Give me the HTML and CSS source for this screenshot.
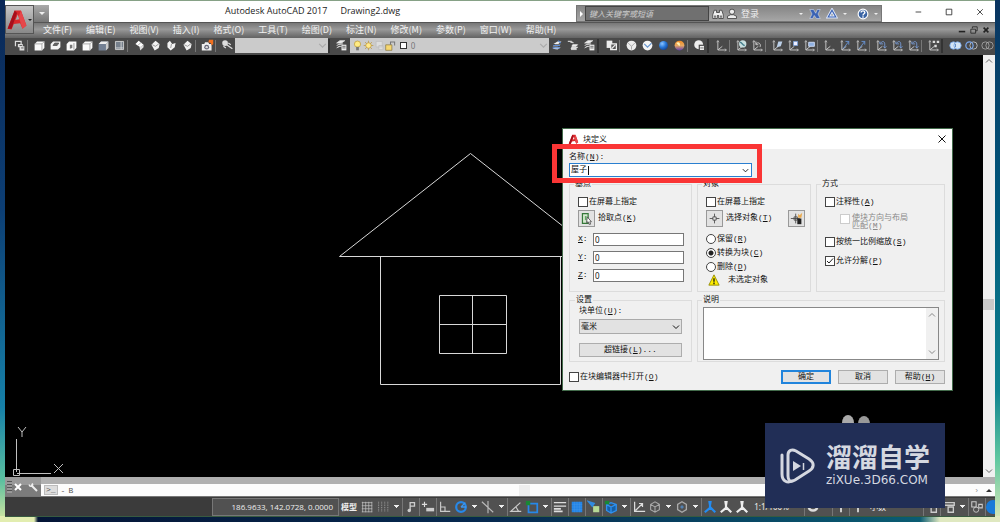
FILE: index.html
```html
<!DOCTYPE html>
<html lang="zh-CN">
<head>
<meta charset="utf-8">
<title>Autodesk AutoCAD 2017 - Drawing2.dwg</title>
<link rel="stylesheet" href="styles.css">
</head>
<body>
<svg class="defs" aria-hidden="true">
  <defs>
    <radialGradient id="ball" cx=".35" cy=".3" r=".8"><stop offset="0" stop-color="#8cc4ff"/><stop offset=".5" stop-color="#2878d8"/><stop offset="1" stop-color="#123c86"/></radialGradient>
    <linearGradient id="sun" x1="0" y1="0" x2="0" y2="1"><stop offset="0" stop-color="#f08a20"/><stop offset=".5" stop-color="#e8a860"/><stop offset="1" stop-color="#6040b0"/></linearGradient>
    <symbol id="views" viewBox="0 0 16 16"><path d="M3 9V3h7v3" fill="none" stroke="#ddd" stroke-width="1.500"/><path d="M6 6h6v3h2v5H8v-4H6z" fill="#ddd"/><path d="M8 8h3M10 11h3" stroke="#444"/></symbol>
    <symbol id="cube-top" viewBox="0 0 16 16"><path d="M2 6l3-3h9v8l-3 3H2z" fill="#fafafa"/><path d="M2 6h9v8M11 6l3-3" fill="none" stroke="#999"/></symbol>
    <symbol id="cube-bottom" viewBox="0 0 16 16"><path d="M2 6l3-3h9v7l-3 3H2z" fill="#f4f4f4"/><path d="M5 8h5l2-3H7z" fill="#666" stroke="#555"/></symbol>
    <symbol id="cube-left" viewBox="0 0 16 16"><path d="M2 6l3-3h9v8l-3 3H2z" fill="#fafafa"/><path d="M6 7h3v4l-3 1z" fill="#777"/><path d="M11 5v8" stroke="#888"/></symbol>
    <symbol id="cube-back" viewBox="0 0 16 16"><path d="M2 6l3-3h9v8l-3 3H2z" fill="#738094"/><path d="M2 6l3-3h9l-3 3z" fill="#eee"/><path d="M11 6l3-3v8l-3 3z" fill="#ccc"/></symbol>
    <symbol id="cube-line" viewBox="0 0 16 16"><path d="M3 3h10v10H3z" fill="#76808c" stroke="#ddd"/><path d="M10 3v10M3 11h10" stroke="#ddd"/></symbol>
    <symbol id="iso-a" viewBox="0 0 16 16"><path d="M7 2l6 5-4 3-6-4z" fill="#fff"/><path d="M8 10l5-3v3l-4 4z" fill="#ddd"/><path d="M6 8l4-4" stroke="#999"/></symbol>
    <symbol id="iso-b" viewBox="0 0 16 16"><path d="M3 7l5-5 5 4-1 5-5 3z" fill="#f2f2f2"/><path d="M4 7l4 2 4-3" fill="none" stroke="#888"/></symbol>
    <symbol id="iso-c" viewBox="0 0 16 16"><path d="M3 5l3-3 3 4 4-1-1 5-5 4-4-4z" fill="#f2f2f2"/><path d="M8 6l-1 5" stroke="#888"/></symbol>
    <symbol id="camera" viewBox="0 0 16 16"><path d="M1 6h3l1-2h4l1 2h3v8H1z" fill="#eee"/><circle cx="7" cy="10" r="3" fill="#667"/><circle cx="7" cy="10" r="1.500" fill="#ddd"/><path d="M10 1h5v5l-2 2-1-3-3-1z" fill="#f07020"/></symbol>
    <symbol id="orbit" viewBox="0 0 16 16"><circle cx="5" cy="5" r="3.500" fill="#ddd"/><path d="M3 5h3M7 7l7 5M3 9l3 2M9 5l3 2" stroke="#ddd" stroke-width="1.500"/></symbol>
    <symbol id="layers" viewBox="0 0 16 16"><path d="M2 5l4-3h6l-4 3zM2 8l4-2h4M2 11l3-2h3" fill="#eee" stroke="#ddd"/><path d="M8 7h6v7H8z" fill="#eee"/><path d="M9 9h4M9 11h4" stroke="#555"/></symbol>
    <symbol id="layers-blue" viewBox="0 0 16 16"><path d="M3 6l5-3h5l-4 3zM2 9l3-2h7l-4 2zM2 12l3-2h7l-4 3z" fill="#eee"/><path d="M3 8h8M2 11h9M9 2l3 3" stroke="#5d8cd5" stroke-width="1.500"/></symbol>
    <symbol id="layer-arrow" viewBox="0 0 16 16"><path d="M7 7h6l-2 2H6zM6 10h7l-2 2H5zM5 13h7" fill="#eee" stroke="#eee"/><path d="M1 3h4v2M5 3l3 2" fill="none" stroke="#ccc" stroke-width="1.500"/></symbol>
    <symbol id="block" viewBox="0 0 16 16"><path d="M2 2h7v9H2z" fill="#ececec"/><path d="M7 6h7v7H7z" fill="#555" stroke="#eee" stroke-width="1.500"/><path d="M8 12l5-5" stroke="#eee" stroke-width="1.500"/></symbol>
    <symbol id="disc" viewBox="0 0 16 16"><circle cx="8" cy="8" r="6" fill="#ededed"/><path d="M4 5l4 4 4-4M8 9v4" fill="none" stroke="#999"/></symbol>
    <symbol id="disc-blue" viewBox="0 0 16 16"><circle cx="8" cy="8" r="6" fill="#f4f4f4"/><path d="M4 6l4 4 5-5" fill="none" stroke="#6594ce" stroke-width="1.500"/></symbol>
    <symbol id="sphere" viewBox="0 0 16 16"><circle cx="8" cy="8" r="5.500" fill="url(#ball)"/></symbol>
    <symbol id="render" viewBox="0 0 16 16"><circle cx="8" cy="8" r="6" fill="url(#sun)"/><path d="M4 5c2-2 6-1 4 4z" fill="#fff3b8"/></symbol>
    <symbol id="style" viewBox="0 0 16 16"><circle cx="7" cy="7" r="5.500" fill="#eee"/><path d="M7 7h8v7H7z" fill="#494949"/><path d="M8.500 8.500h5v5h-5z" fill="#eee"/><path d="M9 11h4" stroke="#555"/></symbol>
    <symbol id="ucs" viewBox="0 0 16 16"><path d="M3.500 2v11.500H14M4 13l5-4" fill="none" stroke="#ddd"/><path d="M2 4l1.500-2L5 4M12 12l2 1.500-2 1.500" fill="none" stroke="#bbb"/></symbol>
    <symbol id="ucs-world" viewBox="0 0 16 16"><use href="#ucs"/><circle cx="9.500" cy="6" r="4.500" fill="#c9e0e0"/><path d="M6 4c3 0 3 4 6 4" fill="none" stroke="#47808e" stroke-width="2"/></symbol>
    <symbol id="ucs-prev" viewBox="0 0 16 16"><use href="#ucs"/><path d="M6 6c3-3 7 0 5 4M6 3v4h3" fill="none" stroke="#ddd"/></symbol>
    <symbol id="ucs-face" viewBox="0 0 16 16"><use href="#ucs"/><path d="M7 10l2-7h5l-2 6z" fill="#bcd0e8"/></symbol>
    <symbol id="ucs-obj" viewBox="0 0 16 16"><use href="#ucs"/><path d="M8 3h5v5H8z" fill="#eef" stroke="#79a0d8"/></symbol>
    <symbol id="ucs-view" viewBox="0 0 16 16"><use href="#ucs"/><path d="M7 4h7v5H7z" fill="#8fb0e0" stroke="#dde8ff"/></symbol>
    <symbol id="ucs-z" viewBox="0 0 16 16"><use href="#ucs"/><path d="M5 12l7-9M8 3h4v4" fill="none" stroke="#6b9be0"/></symbol>
    <symbol id="ucs-rot" viewBox="0 0 16 16"><use href="#ucs"/><path d="M7 5c2-3 5-2 5 1v5M6 3v3h4M10 9l2 2 2-2" fill="none" stroke="#7da4e4"/></symbol>
    <symbol id="ucs-apply" viewBox="0 0 16 16"><use href="#ucs"/><path d="M7 2h3v3H7zM12 2h3v3h-3zM9 7h3v3H9z" fill="#ddd"/></symbol>
    <symbol id="union" viewBox="0 0 16 16"><circle cx="5.500" cy="8" r="4.500" fill="#d5e5f5" stroke="#709fe0"/><circle cx="10.500" cy="8" r="4.500" fill="#d5e5f5" stroke="#709fe0"/><path d="M8 6v4" stroke="#4978bc"/></symbol>
    <symbol id="subtract" viewBox="0 0 16 16"><circle cx="10.500" cy="8" r="4.500" fill="none" stroke="#ccc"/><circle cx="5.500" cy="8" r="4.500" fill="none" stroke="#79a7ed" stroke-width="1.500"/></symbol>
    <symbol id="intersect" viewBox="0 0 16 16"><circle cx="10.500" cy="8" r="4.500" fill="none" stroke="#aaa"/><circle cx="5.500" cy="8" r="4.500" fill="none" stroke="#aaa"/></symbol>
    <symbol id="bulb" viewBox="0 0 16 16"><circle cx="8" cy="6" r="4.500" fill="#ffeb83" stroke="#b99634"/><path d="M6 10h4v5H6z" fill="#777"/></symbol>
    <symbol id="sunny" viewBox="0 0 16 16"><path d="M8 1v14M1 8h14M3 3l10 10M13 3L3 13" stroke="#b6923d"/><circle cx="8" cy="8" r="4" fill="#ffe98a" stroke="#b6923d"/></symbol>
    <symbol id="vp" viewBox="0 0 16 16"><path d="M3 2h9v8H3zM7 8h6v6H7z" fill="#ddd" stroke="#bbb"/></symbol>
    <symbol id="lock" viewBox="0 0 16 16"><path d="M1 7h9v8H1z" fill="#f6d771" stroke="#84733c"/><path d="M8 7V3h6v5" fill="none" stroke="#777" stroke-width="1.500"/></symbol>
    <symbol id="logo-a" viewBox="0 0 28 28"><path d="M2 25L11 2h8l7 19-5 4-3-7-8 1-3 7zM12 14l5-1-2-6z" fill="#d9282b" fill-rule="evenodd"/><path d="M2 25L11 2l3 3-7 20z" fill="#a60f1b"/><path d="M19 2l7 19-5 4-5-15z" fill="#e6474a"/></symbol>
    <symbol id="grid" viewBox="0 0 16 16"><path d="M3 2v12M6.500 2v12M10 2v12M13.500 2v12M2 3h12M2 6.500h12M2 10h12M2 13.500h12" stroke="#c4c4c4" stroke-width=".8"/></symbol>
    <symbol id="snap" viewBox="0 0 16 16"><path d="M3 2v12M6.500 2v12M10 2v12M13.500 2v12" stroke="#aaa" stroke-dasharray="1 1"/></symbol>
    <symbol id="infer" viewBox="0 0 16 16"><path d="M7 12V3h5v4H7" fill="none" stroke="#ccc" stroke-width="1.500"/><circle cx="6" cy="12" r="2" fill="#ccc"/></symbol>
    <symbol id="dyn" viewBox="0 0 16 16"><path d="M4 2v6M1 5h6" stroke="#ddd" stroke-width="1.300"/><path d="M6 9h9v4H6z" fill="#ccc"/></symbol>
    <symbol id="ortho" viewBox="0 0 16 16"><path d="M3 2v11h11M3 8h5v5" fill="none" stroke="#ccc" stroke-width="1.300"/></symbol>
    <symbol id="polar" viewBox="0 0 16 16"><circle cx="8" cy="8" r="5.500" fill="none" stroke="#2788e8" stroke-width="2.500"/><path d="M8 8l5-5M8 8h6" stroke="#3d98f0" stroke-width="1.500"/></symbol>
    <symbol id="iso" viewBox="0 0 16 16"><path d="M1 2l13 12M8 1v14" stroke="#bbb" stroke-width="1.300"/></symbol>
    <symbol id="track" viewBox="0 0 16 16"><path d="M13 3L2 13h12M8 8l3 5" fill="none" stroke="#ccc" stroke-width="1.300"/></symbol>
    <symbol id="osnap" viewBox="0 0 16 16"><path d="M4 4h10v10H4z" fill="none" stroke="#2788e8" stroke-width="2"/><path d="M1 1h5v5H1z" fill="#198734"/></symbol>
    <symbol id="weight" viewBox="0 0 16 16"><path d="M1 3h14M1 7h14" stroke="#ddd" stroke-width="1.500"/><path d="M1 10h8M1 13h10" stroke="#ddd" stroke-width="2"/></symbol>
    <symbol id="trans" viewBox="0 0 16 16"><path d="M2 2h12v12H2z" fill="#2384e6"/><path d="M2 5h12M2 8h12M2 11h12M5 2v12M8 2v12M11 2v12" stroke="#4899e8" stroke-width=".5"/></symbol>
    <symbol id="cycle" viewBox="0 0 16 16"><path d="M2 2l6 2-2 3z" fill="#318be0" stroke="#318be0" stroke-width="2"/><path d="M7 7h7v7H7z" fill="#b7d995"/></symbol>
    <symbol id="osnap3" viewBox="0 0 16 16"><path d="M3 5l5-2 6 2v7l-6 3-5-3zM3 5l5 3 6-3M8 8v6" fill="#1560a8" stroke="#2f91ef" stroke-width="1.500"/><path d="M1 1h5v4H1z" fill="#198734"/></symbol>
    <symbol id="ducs" viewBox="0 0 16 16"><path d="M3 2v11h12M4 12l8-8M8 4h4v4" fill="none" stroke="#ddd" stroke-width="1.400"/></symbol>
    <symbol id="box" viewBox="0 0 16 16"><path d="M3 5l5-3 5 3v6l-5 3-5-3zM3 5l5 3 5-3M8 8v6" fill="none" stroke="#aaa" stroke-width="1.200"/></symbol>
    <symbol id="gizmo" viewBox="0 0 16 16"><path d="M8 2l5 3v6l-5 3-5-3V5z" fill="none" stroke="#aaa" stroke-width="1.500"/><path d="M6 8h4M8 6v4" stroke="#5598e0"/></symbol>
    <symbol id="person" viewBox="0 0 16 16"><path d="M8 1v8l-6 5M8 8l6 6" fill="none" stroke="currentColor" stroke-width="2.500"/><path d="M6 1h4l-1 6H7z" fill="currentColor"/></symbol>
    <symbol id="isolate" viewBox="0 0 16 16"><path d="M2 2h5v6H2zM10 5h4v4h-4z" fill="none" stroke="#ccc" stroke-width="1.200"/><circle cx="7" cy="11" r="3" fill="none" stroke="#ccc"/></symbol>
    <symbol id="ui" viewBox="0 0 16 16"><path d="M2 3h12v3H2M7 8h6v6H7z" fill="none" stroke="#ccc" stroke-width="1.500"/></symbol>
    <symbol id="gear" viewBox="0 0 16 16"><circle cx="8" cy="7" r="5" fill="none" stroke="#ddd" stroke-width="3"/></symbol>
    <symbol id="plus" viewBox="0 0 16 16"><path d="M8 2v12M2 7h12" stroke="#ddd" stroke-width="2"/></symbol>
    <symbol id="chev" viewBox="0 0 10 10"><path d="M2 3.500l3 3 3-3" fill="none" stroke="currentColor"/></symbol>
    <symbol id="cross" viewBox="0 0 10 10"><path d="M1.500 1.500l7 7M8.500 1.500l-7 7" fill="none" stroke="currentColor"/></symbol>
  </defs>
</svg>

<div class="app">
  <header class="titlebar">
    <button class="appbtn" aria-label="应用程序菜单"><svg class="applogo"><use href="#logo-a"/></svg><i class="caret dark"></i></button>
    <button class="quick" aria-label="快速访问"><i class="caret"></i></button>
    <h1 class="apptitle"><span>Autodesk AutoCAD 2017</span><span>Drawing2.dwg</span></h1>
    <div class="info">
      <button class="infoarrow" aria-label="展开"><svg viewBox="0 0 8 8"><path d="M3 1l3 3-3 3z" fill="#fff"/></svg></button>
      <input class="search" type="search" placeholder="键入关键字或短语" aria-label="搜索">
      <button class="infobtn" aria-label="查找"><svg viewBox="0 0 16 16"><path d="M3 3h3v3h4V3h3l2 6v5H9v-4H7v4H1V9z" fill="#eee" stroke="#333"/><path d="M3 10h2v3H3zM11 10h2v3h-2z" fill="#555"/></svg></button>
      <button class="login"><svg viewBox="0 0 16 16"><circle cx="8" cy="5" r="3.500" fill="#eee" stroke="#333"/><path d="M2 14v-3l4-2h4l4 2v3z" fill="#eee" stroke="#333"/></svg>登录</button>
      <i class="caret"></i>
      <button class="infobtn" aria-label="Exchange"><svg viewBox="0 0 16 16"><path d="M1 2h5l3 5 2-5h4l-3 6 3 6h-5l-3-4-2 4H1l3-6z" fill="#3b63b4" stroke="#e0e8f8" stroke-width=".7"/></svg></button>
      <button class="infobtn" aria-label="A360"><svg viewBox="0 0 16 16"><path d="M8 3l5 9H3z" fill="none" stroke="#dfe8fa" stroke-width="4"/><path d="M8 3l5 9H3z" fill="none" stroke="#3b63b4" stroke-width="1.500"/></svg></button>
      <i class="caret"></i>
      <button class="infobtn help" aria-label="帮助"><svg viewBox="0 0 16 16"><circle cx="8" cy="8" r="6.500" fill="#3964a5" stroke="#fff" stroke-width="1.500"/><path d="M5.500 6c0-3 5-3 5 0 0 2-2.500 1.500-2.500 4M8 11v2" fill="none" stroke="#fff" stroke-width="1.800"/></svg></button>
      <i class="caret"></i>
    </div>
    <div class="winbtns">
      <button aria-label="最小化"><svg viewBox="0 0 10 10"><path d="M2 5h7" stroke="#222"/></svg></button>
      <button aria-label="最大化"><svg viewBox="0 0 10 10"><path d="M1.500 1.500h7v7h-7z" fill="none" stroke="#222"/></svg></button>
      <button aria-label="关闭"><svg><use href="#cross"/></svg></button>
    </div>
  </header>

  <nav class="menubar">
    <button>文件(F)</button><button>编辑(E)</button><button>视图(V)</button><button>插入(I)</button><button>格式(O)</button><button>工具(T)</button><button>绘图(D)</button><button>标注(N)</button><button>修改(M)</button><button>参数(P)</button><button>窗口(W)</button><button>帮助(H)</button>
    <span class="docbtns">
      <button aria-label="最小化图形"><svg viewBox="0 0 10 10"><path d="M1 7h8" stroke="#222" stroke-width="2"/></svg></button>
      <button aria-label="还原图形"><svg viewBox="0 0 10 10"><path d="M3 3V1h6v5H7M1 4h6v5H1z" fill="none" stroke="#222"/></svg></button>
      <button aria-label="关闭图形"><svg viewBox="0 0 10 10"><path d="M2 2l6 6M8 2L2 8" stroke="#222" stroke-width="2"/></svg></button>
    </span>
  </nav>

  <div class="toolbar">
    <button aria-label="视图"><svg><use href="#views"/></svg></button><i class="sep"></i>
    <button aria-label="俯视"><svg><use href="#cube-top"/></svg></button>
    <button aria-label="仰视"><svg><use href="#cube-bottom"/></svg></button>
    <button aria-label="左视"><svg><use href="#cube-left"/></svg></button>
    <button aria-label="右视"><svg><use href="#cube-top"/></svg></button>
    <button aria-label="前视"><svg><use href="#cube-back"/></svg></button>
    <button aria-label="后视"><svg><use href="#cube-line"/></svg></button><i class="sep"></i>
    <button aria-label="西南"><svg><use href="#iso-a"/></svg></button>
    <button aria-label="东南"><svg><use href="#iso-b"/></svg></button>
    <button aria-label="东北"><svg><use href="#iso-c"/></svg></button>
    <button aria-label="西北"><svg><use href="#iso-b"/></svg></button><i class="sep"></i>
    <button aria-label="相机"><svg><use href="#camera"/></svg></button><i class="sep"></i>
    <button aria-label="上一视图"><svg><use href="#orbit"/></svg></button>
    <span class="combo viewcombo"><select aria-label="视图"><option></option></select><svg><use href="#chev"/></svg></span>
    <i class="gap"></i>
    <button aria-label="图层特性"><svg><use href="#layers"/></svg></button>
    <span class="combo layercombo"><svg><use href="#bulb"/></svg><svg><use href="#sunny"/></svg><svg><use href="#vp"/></svg><svg><use href="#lock"/></svg><i class="swatch"></i><select aria-label="图层"><option>0</option></select><svg><use href="#chev"/></svg></span>
    <button aria-label="置为当前"><svg><use href="#layers-blue"/></svg></button>
    <button aria-label="上一图层"><svg><use href="#layer-arrow"/></svg></button>
    <button aria-label="图层状态"><svg><use href="#layers"/></svg></button><i class="gap"></i>
    <button aria-label="块"><svg><use href="#block"/></svg></button><i class="sep"></i>
    <button aria-label="线框"><svg><use href="#disc"/></svg></button>
    <button aria-label="隐藏"><svg><use href="#disc-blue"/></svg></button>
    <button aria-label="真实"><svg><use href="#sphere"/></svg></button>
    <button aria-label="概念"><svg><use href="#render"/></svg></button><i class="sep"></i>
    <button aria-label="视觉样式"><svg><use href="#style"/></svg></button><i class="gap"></i>
    <button aria-label="UCS"><svg><use href="#ucs"/></svg></button><i class="sep"></i>
    <button aria-label="世界"><svg><use href="#ucs-world"/></svg></button>
    <button aria-label="上一个UCS"><svg><use href="#ucs-prev"/></svg></button><i class="sep"></i>
    <button aria-label="面UCS"><svg><use href="#ucs-face"/></svg></button>
    <button aria-label="对象UCS"><svg><use href="#ucs-obj"/></svg></button>
    <button aria-label="视图UCS"><svg><use href="#ucs-view"/></svg></button><i class="sep"></i>
    <button aria-label="原点"><svg><use href="#ucs"/></svg></button>
    <button aria-label="Z轴矢量"><svg><use href="#ucs-z"/></svg></button>
    <button aria-label="三点"><svg><use href="#ucs-z"/></svg></button><i class="sep"></i>
    <button aria-label="绕X轴"><svg><use href="#ucs-rot"/></svg></button>
    <button aria-label="绕Y轴"><svg><use href="#ucs-rot"/></svg></button>
    <button aria-label="绕Z轴"><svg><use href="#ucs-rot"/></svg></button><i class="sep"></i>
    <button aria-label="应用"><svg><use href="#ucs-apply"/></svg></button><i class="gap"></i>
    <button aria-label="并集"><svg><use href="#union"/></svg></button>
    <button aria-label="差集"><svg><use href="#subtract"/></svg></button>
    <button aria-label="交集"><svg><use href="#intersect"/></svg></button>
  </div>

  <main class="workspace">
    <div class="canvas">
      <svg class="drawing" width="700" height="423" fill="none" stroke="#d8d8d8">
        <path d="M334.500 201.500L465.500 98.500 596.500 201.500zM375.500 201.500v128h180v-128M434.500 240.500h67v58h-67zM467.500 240.500v58M434.500 269.500h67"/>
        <g stroke="#c0c0c0"><path d="M11.500 417V384M12 418.500h34M8.500 414.500h6v6h-6zM13 372l4 5 4-5M17 377v5M49 409l9 9M58 409l-9 9"/></g>
      </svg>
      <svg class="shapes" viewBox="0 0 30 12"><ellipse cx="6" cy="8" rx="6" ry="8" fill="#aaa"/><ellipse cx="22" cy="9" rx="6" ry="8" fill="#999"/></svg>
    </div>
    <div class="vscroll"><svg class="flip"><use href="#chev"/></svg><i class="thumb"></i><svg><use href="#chev"/></svg></div>
  </main>

  <div class="command">
    <div class="cmdtools">
      <i class="grip"></i>
      <button aria-label="关闭命令行"><svg viewBox="0 0 10 10"><path d="M2 2l6 6M8 2L2 8" stroke="#fff" stroke-width="2"/></svg></button>
      <button aria-label="自定义"><svg viewBox="0 0 10 10"><path d="M3 3l6 6" stroke="#eee" stroke-width="2"/><path d="M1 2l2 2 1-3c2 0 2 4-1 4C1 5 0 3 1 2z" fill="#eee"/></svg></button>
    </div>
    <label class="cmdline"><span class="prompt">&gt;_</span><span class="dash">-</span><input value="B" aria-label="命令"><i class="hthumb"></i><span class="cmdright">›</span><i class="caret up"></i></label>
  </div>

  <footer class="status">
    <button class="coords">186.9633, 142.0728, 0.0000</button>
    <button class="model">模型</button>
    <button aria-label="栅格"><svg><use href="#grid"/></svg></button>
    <button aria-label="捕捉"><svg><use href="#snap"/></svg></button><i class="caret"></i>
    <button class="bar" aria-label="推断约束"><svg><use href="#infer"/></svg></button>
    <button class="bar" aria-label="动态输入"><svg><use href="#dyn"/></svg></button>
    <button class="bar" aria-label="正交"><svg><use href="#ortho"/></svg></button>
    <button aria-label="极轴"><svg><use href="#polar"/></svg></button><i class="caret"></i>
    <button aria-label="等轴测"><svg><use href="#iso"/></svg></button><i class="caret"></i>
    <button class="bar" aria-label="对象追踪"><svg><use href="#track"/></svg></button>
    <button aria-label="对象捕捉"><svg><use href="#osnap"/></svg></button><i class="caret"></i>
    <button class="bar" aria-label="线宽"><svg><use href="#weight"/></svg></button>
    <button class="bar" aria-label="透明度"><svg><use href="#trans"/></svg></button>
    <button class="bar" aria-label="选择循环"><svg><use href="#cycle"/></svg></button>
    <button class="bar" aria-label="三维捕捉"><svg><use href="#osnap3"/></svg></button><i class="caret"></i>
    <button class="bar" aria-label="动态UCS"><svg><use href="#ducs"/></svg></button>
    <button aria-label="过滤"><svg><use href="#box"/></svg></button><i class="caret"></i>
    <button aria-label="小控件"><svg><use href="#gizmo"/></svg></button><i class="caret"></i>
    <button class="bar on" aria-label="注释可见性"><svg><use href="#person"/></svg></button>
    <button aria-label="自动缩放"><svg><use href="#person"/></svg></button>
    <button aria-label="注释比例"><svg><use href="#person"/></svg></button>
    <button class="scale">1:1/100%</button><i class="caret"></i>
    <button class="bar" aria-label="工作空间"><svg><use href="#gear"/></svg></button><i class="space"></i>
    <button class="bar" aria-label="监视器"><svg><use href="#plus"/></svg></button>
    <button class="bar" aria-label="单位"><svg><use href="#plus"/></svg></button>
    <button class="unit">小数</button><i class="fill"></i>
    <button class="bar" aria-label="快捷特性"><svg><use href="#ui"/></svg></button>
    <button class="bar" aria-label="锁定界面"><svg><use href="#ui"/></svg></button><i class="caret"></i>
    <button class="bar" aria-label="隔离对象"><svg><use href="#isolate"/></svg></button>
    <button class="bar perf" aria-label="硬件加速"><i></i></button>
  </footer>
</div>

<section class="dialog" role="dialog" aria-labelledby="dlgtitle">
  <header class="dlghead"><svg><use href="#logo-a"/></svg><h2 id="dlgtitle">块定义</h2><button aria-label="关闭"><svg><use href="#cross"/></svg></button></header>
  <form class="dlgbody">
    <div class="namefield">
      <label for="bname">名称(<u>N</u>):</label>
      <div class="namebox"><input id="bname" value="屋子"><i class="textcaret"></i><svg><use href="#chev"/></svg></div>
    </div>
    <div class="groups">
      <fieldset class="base"><legend>基点</legend>
        <label class="row check"><input type="checkbox">在屏幕上指定</label>
        <div class="row pick"><button type="button" class="icon" id="pick" aria-label="拾取点"><svg viewBox="0 0 16 16"><path d="M3 2h7v12H3z" fill="#d5e8d0" stroke="#36783a" stroke-width="1.500"/><path d="M6 5h2v5H6z" fill="#62a866"/><path d="M9 6l5 6-2 0 1 3-2 0-1-3-2 1z" fill="#fff" stroke="#444"/></svg></button><label for="pick">拾取点(<u>K</u>)</label></div>
        <div class="row axis"><label for="px"><u>X</u>:</label><input id="px" value="0"></div>
        <div class="row axis"><label for="py"><u>Y</u>:</label><input id="py" value="0"></div>
        <div class="row axis"><label for="pz"><u>Z</u>:</label><input id="pz" value="0"></div>
      </fieldset>
      <fieldset class="object"><legend>对象</legend>
        <label class="row check"><input type="checkbox">在屏幕上指定</label>
        <div class="row pick"><button type="button" class="icon" id="sel" aria-label="选择对象"><svg viewBox="0 0 16 16"><path d="M8 2v4M8 10v4M2 8h4M10 8h4M6 6h4v4H6z" fill="none" stroke="#444"/></svg></button><label for="sel">选择对象(<u>T</u>)</label><button type="button" class="icon quicksel" aria-label="快速选择"><svg viewBox="0 0 16 16"><path d="M7 2v12M1 8h11M5 6h4v4H5z" fill="none" stroke="#444"/><path d="M9 8h5v7H9z" fill="#222"/><path d="M10 2l2 2 3-3-1 6h-4z" fill="#eaaa4d"/></svg></button></div>
        <label class="radio"><input type="radio" name="mode">保留(<u>R</u>)</label>
        <label class="radio"><input type="radio" name="mode" checked>转换为块(<u>C</u>)</label>
        <label class="radio"><input type="radio" name="mode">删除(<u>D</u>)</label>
        <p class="warn"><svg viewBox="0 0 14 14"><path d="M7 1l6 12H1z" fill="#ffee00" stroke="#8c8500"/><path d="M7 5v4M7 10v2" stroke="#111" stroke-width="1.500"/></svg>未选定对象</p>
      </fieldset>
      <fieldset class="behave"><legend>方式</legend>
        <label class="row check"><input type="checkbox">注释性(<u>A</u>)</label>
        <label class="check nested"><input type="checkbox" disabled><span>使块方向与布局<br>匹配(<u>M</u>)</span></label>
        <label class="row check"><input type="checkbox">按统一比例缩放(<u>S</u>)</label>
        <label class="row check"><input type="checkbox" checked>允许分解(<u>P</u>)</label>
      </fieldset>
      <fieldset class="settings"><legend>设置</legend>
        <label for="unit">块单位(<u>U</u>):</label>
        <div class="unitbox"><select id="unit"><option>毫米</option></select><svg><use href="#chev"/></svg></div>
        <button type="button" class="push">超链接(<u>L</u>)...</button>
      </fieldset>
      <fieldset class="desc"><legend>说明</legend>
        <div class="descbox"><textarea aria-label="说明"></textarea><div class="descscroll"><svg class="flip"><use href="#chev"/></svg><svg><use href="#chev"/></svg></div></div>
      </fieldset>
    </div>
    <div class="dlgfoot"><label class="check"><input type="checkbox">在块编辑器中打开(<u>O</u>)</label><button type="button" class="push primary">确定</button><button type="button" class="push">取消</button><button type="button" class="push">帮助(<u>H</u>)</button></div>
  </form>
</section>
<div class="highlight"></div>
<aside class="brand">
  <svg viewBox="0 0 36 36"><path d="M3 7v19c0 8 6 9 10 7" fill="none" stroke="#d5d8e0" stroke-width="3" stroke-linecap="round"/><path d="M9 7c0-5 4-6 8-4l13 8c6 4 5 9 0 12l-14 9c-5 3-7 0-7-4z" fill="none" stroke="#d5d8e0" stroke-width="3"/><path d="M14 13l8 5-8 5z" fill="#d5d8e0"/><path d="M24.500 15v7" stroke="#d5d8e0" stroke-width="1.500"/></svg>
  <div class="brandtext"><strong>溜溜自学</strong><span>ziXUe.3D66.COM</span></div>
</aside>
</body>
</html>
```
FILE: styles.css
```css
* { box-sizing: border-box; }
body {
  margin: 0;
  min-height: 100vh;
  padding: 1px 5px 5px;
  display: flex;
  position: relative;
  overflow: hidden;
  font: 9px/12px "Noto Sans", "Noto Sans CJK SC", sans-serif;
  background:
    linear-gradient(90deg, #e2edb0 0 34px, transparent 38px) 0 100% / 50% 6px no-repeat,
    linear-gradient(90deg, #041334, #062a50 50%, #0a5c72 92%, #dfe8c0 94%) 0 100% / 100% 6px no-repeat,
    linear-gradient(180deg, #0a2856, #0c3e74 40%, #1680a8 78%, #5cc0a0 92%, #d8e8a0) 0 0 / 5px 100% no-repeat,
    linear-gradient(180deg, #0a3460, #00587c 40%, #108490 75%, #60c8a0 88%, #dce8b8) 100% 0 / 5px 100% no-repeat,
    #86a186;
}
button, input, select, textarea { font: inherit; color: inherit; margin: 0; padding: 0; border: 0; background: none; border-radius: 0; outline: 0; min-width: 0; }
button { white-space: nowrap; }
select { appearance: none; }
svg { display: block; flex: none; }
.defs { position: absolute; width: 0; height: 0; }
.flip { transform: rotate(180deg); }
.caret { flex: none; width: 0; height: 0; border: 3px solid transparent; border-top-color: #eee; border-bottom: 0; }
.app { flex: 1; min-width: 0; display: flex; flex-direction: column; position: relative; overflow: hidden; border-bottom: 1px solid #375a40; background: #000; }

.titlebar { height: 21px; display: flex; background: #fff; }
.appbtn { position: absolute; left: 0; top: 4px; width: 29px; height: 29px; z-index: 1; display: flex; align-items: center; background: linear-gradient(#c5c5c5, #888); border: 1px solid #555; }
.applogo { width: 22px; height: 24px; }
.appbtn .caret { border-width: 2px; border-bottom: 0; }
.appbtn .dark { border-top-color: #222; }
.quick { margin: 4px 0 0 29px; width: 15px; background: linear-gradient(#aaa, #777); display: flex; align-items: center; justify-content: center; }
.apptitle { flex: 1; margin: 0; padding-left: 176px; display: flex; gap: 13px; font: 9px/19px "Open Sans", sans-serif; color: #222; white-space: nowrap; }
.info { width: 306px; height: 17px; margin-top: 4px; display: flex; align-items: center; background: linear-gradient(#858585, #a6a6a6); border: 1px solid #777; }
.info > * { flex: none; }
.info .caret { border-width: 2px; border-bottom: 0; margin: 0 3px; }
.infoarrow svg { width: 8px; height: 8px; }
.search { width: 124px; height: 15px; padding: 0 3px; background: #707070; border: 1px solid #444; font-size: 8px; font-style: italic; }
.search::placeholder { color: #ccc; }
.infobtn { width: 17px; }
.infobtn svg, .login svg { width: 12px; height: 12px; margin: auto; }
.info .login { flex: 1; display: flex; align-items: center; gap: 3px; color: #eee; }
.login svg { margin: 0; }
.help { margin-left: 4px; }
.winbtns { display: flex; width: 113px; justify-content: flex-end; color: #222; }
.winbtns button { width: 31px; }
.winbtns svg { width: 8px; height: 8px; margin: auto; }

.menubar { height: 15px; padding: 0 4px 0 38px; display: flex; gap: 14px; background: linear-gradient(#777, #999 45%, #686868); border-top: 1px solid #555; color: #f2f2f2; font-family: "Noto Sans CJK SC", sans-serif; }
.docbtns { display: flex; margin-left: auto; gap: 1px; }
.docbtns button { width: 11px; }
.docbtns svg { width: 8px; height: 8px; margin: auto; }
.toolbar { height: 18px; display: flex; align-items: center; padding: 0 0 2px 6px; background: #494949; border-top: 1px solid #666; }
.toolbar > button { flex: none; width: 16px; height: 14px; }
.toolbar > button svg { width: 13px; height: 13px; margin: auto; }
.sep { flex: none; width: 4px; height: 12px; border-left: 1px solid #777; }
.gap { flex: none; width: 6px; height: 14px; border-left: 2px solid #333; }
.combo { height: 15px; display: flex; align-items: center; background: #cbcbcb; color: #777; font-size: 8px; }
.combo select { flex: 1; height: 100%; }
.combo svg { width: 11px; height: 11px; color: #aaa; }
.viewcombo { width: 96px; }
.layercombo { width: 206px; padding-left: 2px; }
.swatch { width: 7px; height: 7px; margin: 0 4px; background: #fff; border: 1px solid #333; }

.workspace { flex: 1; min-height: 0; display: flex; background: #000; }
.canvas { flex: 1; min-width: 0; position: relative; overflow: hidden; }
.drawing { position: absolute; left: 0; top: 0; }
.shapes { position: absolute; left: 837px; top: 360px; width: 30px; height: 12px; }
.vscroll { width: 12px; background: #f0f0f0; color: #666; display: flex; flex-direction: column; }
.vscroll svg { width: 10px; height: 12px; margin: 0 1px; }
.thumb { height: 11px; margin: 232px 1px auto 0; background: #c9c9c9; }
.command { height: 19px; display: flex; background: #fcfcfc; }
.cmdtools { width: 36px; display: flex; align-items: center; gap: 5px; background: linear-gradient(#999 40%, #7c7c7c 40%); }
.cmdtools svg { width: 10px; height: 10px; }
.grip { width: 5px; height: 12px; margin-left: 2px; margin-right: -4px; background: repeating-linear-gradient(#555 0 1px, #999 1px 3px); }
.cmdline { flex: 1; display: flex; align-items: center; border-top: 7px solid #b0b0b0; padding: 0 3px; gap: 3px; color: #555; font: 8px/11px "Liberation Mono", monospace; }
.prompt { padding: 0 1px; line-height: 8px; background: #ddd; border: 1px solid #bbb; }
.cmdline input { width: 448px; height: 11px; }
.hthumb { width: 11px; height: 11px; background: #eee; }
.cmdright { margin-left: auto; color: #999; }
.up { transform: rotate(180deg); margin-left: 4px; }
.caret.up { border-top-color: #333; }
.status { height: 20px; display: flex; align-items: center; justify-content: flex-end; background: #3b3b3b; border-top: 1px solid #777; color: #eee; }
.status > * { flex: none; }
.status button { width: 16px; height: 18px; background: #515151; }
.status button svg { width: 14px; height: 14px; margin: auto; }
.status .bar { width: 17px; border-left: 1px solid #777; }
.status .caret { width: 11px; height: 18px; border: 0; background: linear-gradient(#eee, #eee) 3px 7px / 5px 1px no-repeat, linear-gradient(#eee, #eee) 4px 8px / 3px 1px no-repeat, linear-gradient(#eee, #eee) 5px 9px / 1px 1px no-repeat, #515151; }
.status .coords { width: 127px; border: 1px solid #777; text-align: right; padding-right: 5px; font: 8px/16px "Open Sans", sans-serif; }
.status .model { width: 20px; font-size: 8px; font-weight: 700; }
.status .on { color: #248cf0; }
.status .scale { width: 43px; font-size: 8px; }
.space { width: 11px; height: 18px; background: #515151; }
.status .unit { width: 24px; font-size: 8px; }
.fill { width: 33px; height: 18px; background: #515151; }
.status .perf { width: 10px; overflow: hidden; }
.perf i { display: block; width: 14px; height: 14px; border-radius: 50%; background: #187ad8; }

.dialog { position: absolute; left: 562px; top: 128px; width: 391px; background: #f0f0f0; border: 1px solid #436b4b; color: #111; font: 8px/10px "Liberation Mono", "Noto Sans CJK SC", monospace; }
.dlghead { height: 20px; display: flex; align-items: center; gap: 4px; padding: 0 5px; background: #fff; }
.dlghead > svg { width: 11px; height: 11px; }
.dlghead h2 { margin: 0; flex: 1; font: 8px/12px "Noto Sans CJK SC", sans-serif; }
.dlghead button svg { width: 10px; height: 10px; }
.dlgbody { padding: 3px 7px 6px 6px; }
.namefield { width: 183px; }
.namefield label { display: block; height: 11px; }
.namebox { height: 14px; display: flex; align-items: center; padding: 0 1px; background: #fff; border: 1px solid #2a7fd0; }
.namebox input { width: 17px; }
.textcaret { width: 1px; height: 9px; background: #111; }
.namebox svg { width: 9px; height: 9px; margin-left: auto; }
.groups { margin-top: 2px; display: grid; grid-template-columns: 124fr 115fr 130fr; column-gap: 5px; row-gap: 3px; }
fieldset { margin: 0; min-width: 0; border: 1px solid #dcdcdc; padding: 5px 7px 0 8px; }
legend { padding: 0 1px; margin-left: -4px; line-height: 10px; }
.base, .object, .behave { height: 113px; }
.row { height: 18px; }
.check, .pick, .axis, .radio, .warn { display: flex; align-items: center; white-space: nowrap; }
input[type=checkbox], input[type=radio] { appearance: none; flex: none; width: 10px; height: 10px; margin-right: 1px; background: #fff; border: 1px solid #444; }
input[type=radio] { border-radius: 50%; }
input[type=radio]:checked { background: radial-gradient(#222 0 2px, #fff 3px); }
input[type=checkbox]:checked { background: #fff url("data:image/svg+xml,%3Csvg xmlns='http://www.w3.org/2000/svg' viewBox='0 0 8 8'%3E%3Cpath d='M1 4l2 2 4-4.500' fill='none' stroke='%23222'/%3E%3C/svg%3E") center / 8px 8px no-repeat; }
.base .row:first-of-type, .object .row:first-of-type { height: 16px; }
.pick { gap: 3px; }
.icon { flex: none; width: 17px; height: 17px; background: #e2e2e2; border: 1px solid #999; }
.icon svg { width: 13px; height: 13px; margin: auto; }
.base .pick { height: 19px; margin-bottom: 4px; }
.axis label { width: 15px; }
.axis input { flex: 1; height: 13px; padding: 0 1px; background: #fff; border: 1px solid #777; font-family: "Noto Sans", sans-serif; }
.object .pick { height: 19px; margin-bottom: 6px; }
.quicksel { margin-left: auto; margin-right: -2px; }
.radio { height: 14px; }
.warn { margin: 0; height: 12px; gap: 8px; padding-left: 2px; }
.warn svg { width: 12px; height: 12px; }
.behave { padding-top: 4px; }
.nested { height: 22px; padding: 3px 0 0 15px; line-height: 8px; color: #888; align-items: flex-start; }
.nested input { border-color: #ccc; margin-right: 2px; }
.behave .row:last-of-type { height: 20px; }
.settings { height: 67px; padding: 1px 9px 0; }
.settings > label { display: block; height: 13px; }
.unitbox { height: 15px; display: flex; align-items: center; background: #e2e2e2; border: 1px solid #aaa; }
.unitbox select { flex: 1; padding-left: 1px; }
.unitbox svg { width: 10px; height: 10px; }
.push { height: 14px; text-align: center; line-height: 10px; background: #e2e2e2; border: 1px solid #adadad; }
.settings .push { display: block; width: 100%; margin-top: 9px; }
.desc { grid-column: span 2; padding: 2px 5px 0; }
.desc legend { margin-left: -1px; }
.descbox { height: 53px; display: flex; border: 1px solid #888; background: #fff; }
.descbox textarea { flex: 1; resize: none; }
.descscroll { width: 12px; background: #f0f0f0; display: flex; flex-direction: column; justify-content: space-between; padding: 2px 1px; color: #888; }
.descscroll svg { width: 10px; height: 10px; }
.dlgfoot { margin-top: 8px; display: flex; gap: 7px; }
.dlgfoot .check { flex: 1; }
.dlgfoot .push { width: 50px; }
.dlgfoot .primary { border: 2px solid #2084dc; line-height: 8px; }
.highlight { position: absolute; left: 552px; top: 144px; width: 210px; height: 39px; border: 5px solid #fa3535; pointer-events: none; }

.brand { position: absolute; left: 765px; top: 423px; width: 180px; height: 85px; display: flex; align-items: center; gap: 11px; padding-left: 14px; background: #212e56; color: #d5d8e0; }
.brand > svg { width: 36px; height: 36px; }
.brandtext { display: flex; flex-direction: column; padding-bottom: 2px; white-space: nowrap; }
.brandtext strong { font: 700 26px/30px "Liberation Sans", "Noto Sans CJK SC", sans-serif; }
.brandtext span { font: 12px/14px "DejaVu Sans", sans-serif; }
```
